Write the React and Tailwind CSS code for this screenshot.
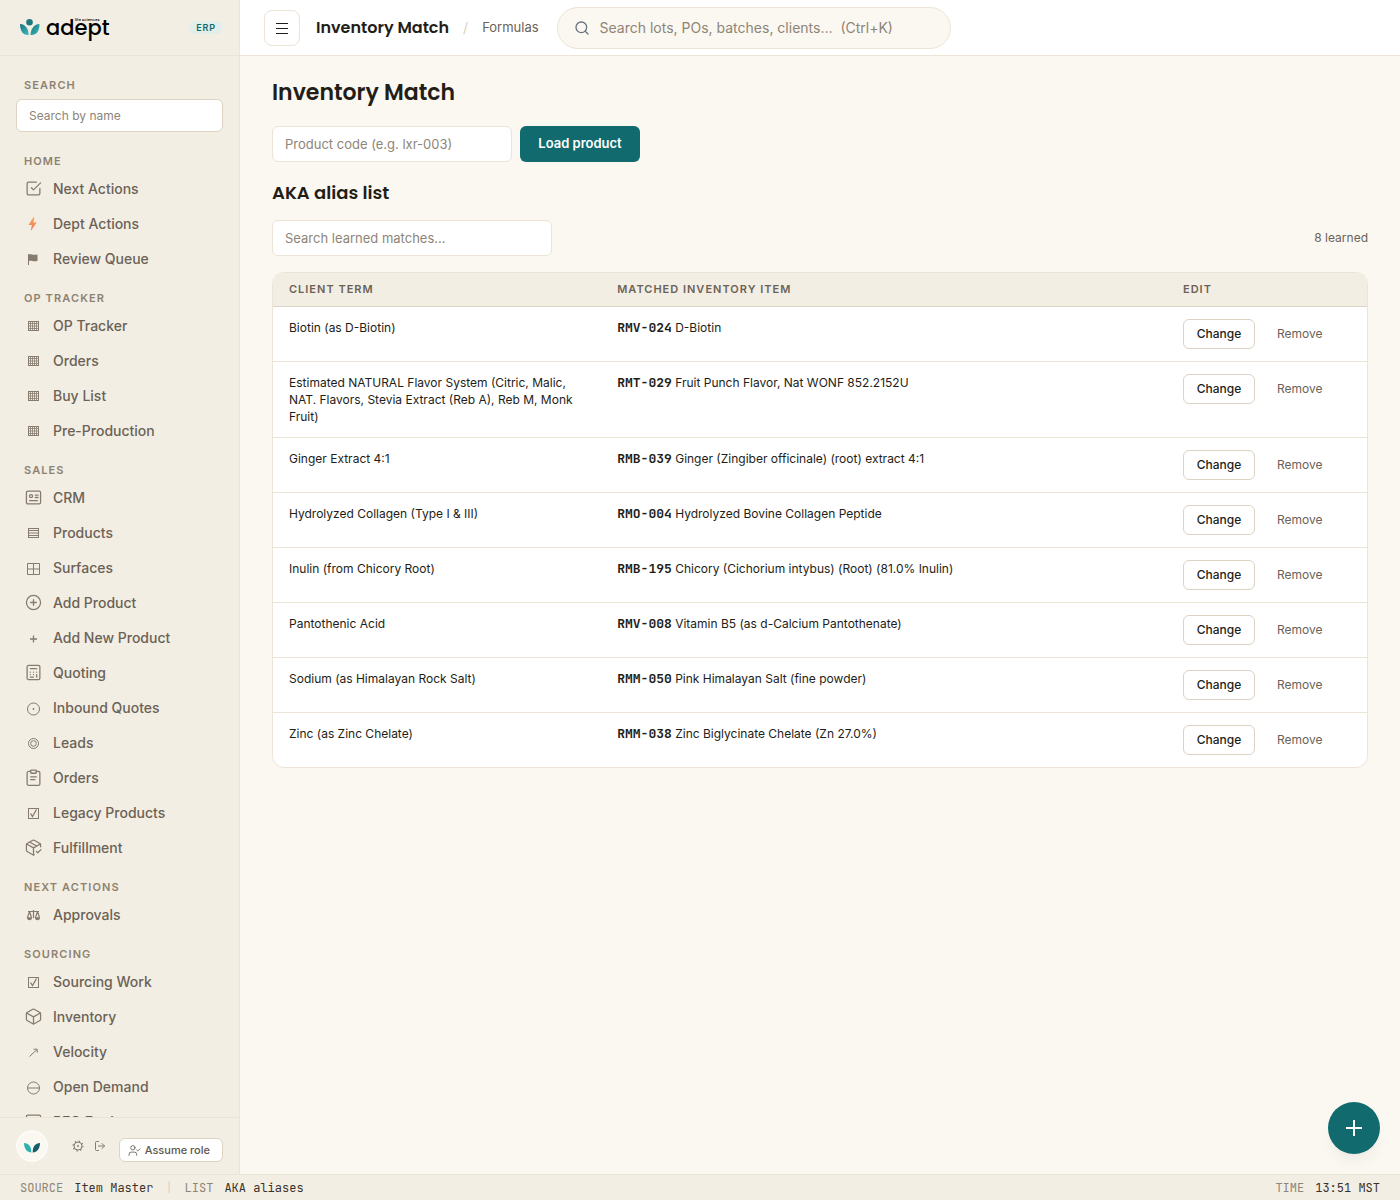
import { UserCheck, LogOut, Search } from "lucide-react";

// Larger outline icons, 24 unit grid
function Outline(props) {
  return (
    <svg width="17" height="17" viewBox="0 0 24 24" fill="none" stroke="currentColor" strokeWidth="1.8" strokeLinecap="round" strokeLinejoin="round" aria-hidden="true">
      {props.children}
    </svg>
  );
}

// Small symbol icons, one unit per pixel
function Symbol(props) {
  return (
    <svg width="18" height="18" viewBox="0 0 18 18" fill="none" stroke="currentColor" strokeWidth="1" aria-hidden="true">
      {props.children}
    </svg>
  );
}

const icons = {
  check: (
    <Outline>
      <path d="M9 11l3 3L22 4" />
      <path d="M21 12v7a2 2 0 0 1-2 2H5a2 2 0 0 1-2-2V5a2 2 0 0 1 2-2h11" />
    </Outline>
  ),
  crm: (
    <Outline>
      <rect x="2" y="3" width="20" height="18" rx="2" />
      <circle cx="8.500" cy="10" r="2.200" />
      <path d="M14.500 8.500h4M14.500 12h4M6.500 16.500h11" />
    </Outline>
  ),
  addCircle: (
    <Outline>
      <circle cx="12" cy="12" r="10" />
      <path d="M12 8v8M8 12h8" />
    </Outline>
  ),
  calc: (
    <Outline>
      <rect x="3" y="2" width="18" height="20" rx="2" />
      <path d="M7.500 6.500h9M7.500 11.500h.01M12 11.500h.01M16.500 11.500h.01M7.500 15h.01M12 15h.01M16.500 15v3.500M7.500 18.500h4.500" />
    </Outline>
  ),
  clipboard: (
    <Outline>
      <rect x="8" y="1.500" width="8" height="4.500" rx="1" />
      <path d="M16 3.500h3a2 2 0 0 1 2 2V21a2 2 0 0 1-2 2H5a2 2 0 0 1-2-2V5.500a2 2 0 0 1 2-2h3" />
      <path d="M8 11h8M8 15h6" />
    </Outline>
  ),
  boxCheck: (
    <Outline>
      <path d="M22 11V8a2 2 0 0 0-1-1.700l-8-4.500a2 2 0 0 0-2 0L3 6.300A2 2 0 0 0 2 8v8a2 2 0 0 0 1 1.700l8 4.500a2 2 0 0 0 2 0" />
      <path d="M2.300 7L12 12.500 21.700 7M12 22.500V12.500M7 4.500l9.500 5.300" />
      <path d="M16 17.500l2 2 4.500-4.500" />
    </Outline>
  ),
  box: (
    <Outline>
      <path d="M22 16V8a2 2 0 0 0-1-1.700l-8-4.500a2 2 0 0 0-2 0L3 6.300A2 2 0 0 0 2 8v8a2 2 0 0 0 1 1.700l8 4.500a2 2 0 0 0 2 0l8-4.500a2 2 0 0 0 1-1.700z" />
      <path d="M2.300 7L12 12.500 21.700 7M12 22.500V12.500" />
    </Outline>
  ),
  bolt: (
    <svg width="18" height="18" viewBox="0 0 18 18" aria-hidden="true">
      <defs>
        <linearGradient id="bolt" x1="0" y1="0" x2="0" y2="1">
          <stop offset="0" stopColor="#f9b04e" />
          <stop offset="1" stopColor="#f0706a" />
        </linearGradient>
      </defs>
      <path d="M9.500 2L4.500 10h3.300L6.700 16l6-8.500H9.500L10.300 2z" fill="url(#bolt)" />
    </svg>
  ),
  flag: (
    <Symbol>
      <path d="M4.500 4v11" />
      <path d="M5 4.500c2-.8 3 .8 8.500 0v6.500c-5 .8-6.500-.8-8.500 0z" fill="currentColor" stroke="none" />
    </Symbol>
  ),
  grid: (
    <Symbol>
      <rect x="4.500" y="4.500" width="10" height="9" />
      <path d="M6.500 4v10M8.500 4v10M10.500 4v10M12.500 4v10M4 6.500h11M4 9h11M4 11.500h11" strokeWidth="0.8" />
    </Symbol>
  ),
  rows: (
    <Symbol>
      <path d="M4.500 4v10M14.500 4v10M4 4.500h11M4 6.500h11M4 9h11M4 11.500h11M4 13.500h11" />
    </Symbol>
  ),
  window: (
    <Symbol>
      <path d="M3.500 4.500h12v11h-12zM9.500 4.500v11M3.500 10h12" />
    </Symbol>
  ),
  plus: (
    <Symbol>
      <path d="M9.500 6.500v7M6 10h7" strokeWidth="1.300" />
    </Symbol>
  ),
  dotCircle: (
    <Symbol>
      <circle cx="9.500" cy="10" r="6" />
      <circle cx="9.500" cy="10" r="0.900" fill="currentColor" stroke="none" />
    </Symbol>
  ),
  rings: (
    <Symbol>
      <circle cx="9.500" cy="9.500" r="5" />
      <circle cx="9.500" cy="9.500" r="2.800" />
    </Symbol>
  ),
  tick: (
    <Symbol>
      <rect x="4.500" y="4.500" width="10" height="10" />
      <path d="M6.500 9.500l2 3 4-7" strokeWidth="1.300" />
    </Symbol>
  ),
  scales: (
    <Symbol>
      <path d="M4 5.500h11M9.500 4v8M5.500 5.500l-2 6M5.500 5.500l2 6M13.500 5.500l-2 6M13.500 5.500l2 6" strokeWidth="1.200" />
      <path d="M2.800 11.300h5.400c0 4-5.400 4-5.400 0zM10.800 11.300h5.400c0 4-5.400 4-5.400 0z" fill="currentColor" stroke="none" />
    </Symbol>
  ),
  arrow: (
    <Symbol>
      <path d="M5.500 13.500l7.500-7M9.500 6.200h3.700v3.600" />
    </Symbol>
  ),
  minusCircle: (
    <Symbol>
      <circle cx="9.500" cy="10" r="6" />
      <path d="M3.500 10h12" />
    </Symbol>
  ),
};

const sections = [
  {
    title: "Home",
    items: [
      { name: "Next Actions", icon: "check" },
      { name: "Dept Actions", icon: "bolt" },
      { name: "Review Queue", icon: "flag" },
    ],
  },
  {
    title: "OP Tracker",
    items: [
      { name: "OP Tracker", icon: "grid" },
      { name: "Orders", icon: "grid" },
      { name: "Buy List", icon: "grid" },
      { name: "Pre-Production", icon: "grid" },
    ],
  },
  {
    title: "Sales",
    items: [
      { name: "CRM", icon: "crm" },
      { name: "Products", icon: "rows" },
      { name: "Surfaces", icon: "window" },
      { name: "Add Product", icon: "addCircle" },
      { name: "Add New Product", icon: "plus" },
      { name: "Quoting", icon: "calc" },
      { name: "Inbound Quotes", icon: "dotCircle" },
      { name: "Leads", icon: "rings" },
      { name: "Orders", icon: "clipboard" },
      { name: "Legacy Products", icon: "tick" },
      { name: "Fulfillment", icon: "boxCheck" },
    ],
  },
  {
    title: "Next Actions",
    items: [{ name: "Approvals", icon: "scales" }],
  },
  {
    title: "Sourcing",
    items: [
      { name: "Sourcing Work", icon: "tick" },
      { name: "Inventory", icon: "box" },
      { name: "Velocity", icon: "arrow" },
      { name: "Open Demand", icon: "minusCircle" },
      { name: "RFQ Engine", icon: "crm" },
    ],
  },
];

const rows = [
  { term: "Biotin (as D-Biotin)", code: "RMV-024", item: "D-Biotin" },
  { term: "Estimated NATURAL Flavor System (Citric, Malic, NAT. Flavors, Stevia Extract (Reb A), Reb M, Monk Fruit)", code: "RMT-029", item: "Fruit Punch Flavor, Nat WONF 852.2152U" },
  { term: "Ginger Extract 4:1", code: "RMB-039", item: "Ginger (Zingiber officinale) (root) extract 4:1" },
  { term: "Hydrolyzed Collagen (Type I & III)", code: "RMO-004", item: "Hydrolyzed Bovine Collagen Peptide" },
  { term: "Inulin (from Chicory Root)", code: "RMB-195", item: "Chicory (Cichorium intybus) (Root) (81.0% Inulin)" },
  { term: "Pantothenic Acid", code: "RMV-008", item: "Vitamin B5 (as d-Calcium Pantothenate)" },
  { term: "Sodium (as Himalayan Rock Salt)", code: "RMM-050", item: "Pink Himalayan Salt (fine powder)" },
  { term: "Zinc (as Zinc Chelate)", code: "RMM-038", item: "Zinc Biglycinate Chelate (Zn 27.0%)" },
];

function Logo() {
  return (
    <a href="#" aria-label="adept life sciences" className="flex items-center gap-[6px]">
      <svg width="20" height="17" viewBox="0 0 20 17" aria-hidden="true">
        <defs>
          <linearGradient id="leaf" x1="0" y1="0" x2="1" y2="1">
            <stop offset="0" stopColor="#17707a" />
            <stop offset="1" stopColor="#3cc0c0" />
          </linearGradient>
        </defs>
        <circle cx="9.500" cy="3.300" r="3.300" fill="#1d7780" />
        <path d="M0 5C5 5 8.500 9 8.700 16 3.500 16.500 0 12.500 0 5z" fill="url(#leaf)" />
        <path d="M19.500 5C14.500 5 11 9 10.500 16 16 16.500 19.500 12.500 19.500 5z" fill="url(#leaf)" />
      </svg>
      <span className="relative font-['Poppins','Inter',sans-serif] text-[21px] leading-6 font-medium text-black">
        adept
        <span className="absolute top-[2px] left-[29px] text-[4px] leading-none whitespace-nowrap">life sciences</span>
      </span>
    </a>
  );
}

function NavItem(props) {
  const item = props.item;
  return (
    <a href="#" className="flex h-[35px] items-center gap-[11px] pl-2 text-sm font-medium text-[#6b6257]">
      <span className="flex h-[18px] w-[18px] shrink-0 items-center justify-center text-[#857b6e]">{icons[item.icon]}</span>
      {item.name}
    </a>
  );
}

function Sidebar() {
  return (
    <aside className="flex w-60 shrink-0 flex-col border-r border-[#e9e4d6] bg-[#f3eee3]">
      <div className="flex h-14 shrink-0 items-center justify-between border-b border-[#e9e4d6] pr-4 pl-5">
        <Logo />
        <span className="rounded-full bg-[#e2eeea] px-[7px] text-[9px] leading-[13px] font-semibold tracking-widest text-[#116b6e]">ERP</span>
      </div>
      <nav className="min-h-0 flex-1 overflow-hidden px-4 pt-[21px]">
        <label htmlFor="nav-search" className="block pl-2 text-[11px] leading-4 font-semibold tracking-widest text-[#8d8271] uppercase">Search</label>
        <input id="nav-search" placeholder="Search by name" className="mt-[6px] mb-[7px] block h-[33px] w-full rounded-md border border-[#dcd3c2] bg-white px-3 text-xs placeholder:text-[#8d8578]" />
        {sections.map((section) => (
          <div key={section.title}>
            <h2 className="pt-[14px] pb-[2px] pl-2 text-[11px] leading-4 font-semibold tracking-widest text-[#8d8271] uppercase">{section.title}</h2>
            {section.items.map((item) => (
              <NavItem key={item.name} item={item} />
            ))}
          </div>
        ))}
      </nav>
      <div className="flex h-[57px] shrink-0 items-center border-t border-[#e9e4d6] px-4">
        <span className="flex h-8 w-8 items-center justify-center rounded-full border border-white bg-[#fbf8f1]">
          <svg width="16" height="10" viewBox="0 0 16 10" className="mt-1" aria-hidden="true">
            <path d="M0 0C4.500 0 7.500 3.500 7.300 9.500 3 9.500 0 5.500 0 0z" fill="#2fb0b0" />
            <path d="M16 0C11.500 0 8.500 3.500 8.700 9.500 13 9.500 16 5.500 16 0z" fill="#155e69" />
          </svg>
        </span>
        <button aria-label="Settings" className="ml-6 text-[#857b6e]">
          <svg width="12" height="12" viewBox="0 0 12 12" fill="none" stroke="currentColor" aria-hidden="true">
            <circle cx="6" cy="6" r="4" />
            <circle cx="6" cy="6" r="4.900" strokeWidth="1.200" strokeDasharray="1.400 2.448" />
            <circle cx="6" cy="6" r="0.900" fill="currentColor" stroke="none" />
          </svg>
        </button>
        <button aria-label="Log out" className="ml-[10px] text-[#857b6e]"><LogOut size={12} strokeWidth={2} /></button>
        <button className="mt-2 ml-auto flex h-6 items-center gap-1 rounded-md border border-[#dcd3c2] bg-white pr-3 pl-2 text-[11px] font-medium text-[#5e564c]">
          <UserCheck size={13} strokeWidth={1.5} />
          Assume role
        </button>
      </div>
    </aside>
  );
}

function Header() {
  return (
    <header className="flex h-14 shrink-0 items-center border-b border-[#ece5d6] bg-white px-6">
      <button aria-label="Menu" className="flex h-9 w-9 items-center justify-center rounded-lg border border-[#ece5d6]">
        <svg width="12" height="12" viewBox="0 0 12 12" stroke="currentColor" strokeWidth="1" aria-hidden="true">
          <path d="M0 1.500h12M0 6.500h12M0 11.500h12" />
        </svg>
      </button>
      <span className="ml-4 font-['Poppins','Inter',sans-serif] text-base font-semibold">Inventory Match</span>
      <span className="mx-[14px] text-sm text-[#d8cfbf]">/</span>
      <a href="#" className="text-[13px] text-[#6b6257]">Formulas</a>
      <label className="ml-[18px] flex h-[42px] w-[394px] items-center gap-[10px] rounded-full border border-[#ece5d6] bg-[#fbf8f1] px-4">
        <Search size={16} strokeWidth={2} className="text-[#6b7280]" />
        <input aria-label="Search everything" placeholder="Search lots, POs, batches, clients…  (Ctrl+K)" className="min-w-0 flex-1 text-sm placeholder:text-[#8d8578]" />
      </label>
    </header>
  );
}

function AliasTable() {
  return (
    <div className="mt-4 overflow-hidden rounded-xl border border-[#ece5d6] bg-white">
      <table className="w-full table-fixed text-left">
        <thead className="bg-[#f3eee3] text-[11px] leading-4 tracking-[1px] text-[#6b6257] uppercase">
          <tr className="h-[33px] border-b border-[#dbd5c5]">
            <th className="w-[30%] px-4 font-semibold">Client term</th>
            <th className="px-4 font-semibold">Matched inventory item</th>
            <th className="w-[200px] px-4 font-semibold">Edit</th>
          </tr>
        </thead>
        <tbody className="text-xs leading-[17px]">
          {rows.map((row) => (
            <tr key={row.code} className="border-b border-[#ece5d6] align-top last:border-b-0">
              <td className="px-4 py-3">{row.term}</td>
              <td className="px-4 py-3">
                <span className="font-['JetBrains_Mono','DejaVu_Sans_Mono',monospace] text-[13px] leading-none font-semibold">{row.code}</span> {row.item}
              </td>
              <td className="px-4 py-3">
                <div className="flex gap-2">
                  <button className="h-[30px] w-[72px] rounded-md border border-[#dcd3c2] bg-white font-medium">Change</button>
                  <button className="h-[30px] px-[14px] text-[#6b6257]">Remove</button>
                </div>
              </td>
            </tr>
          ))}
        </tbody>
      </table>
    </div>
  );
}

function StatusBar() {
  return (
    <footer className="flex h-[26px] shrink-0 items-center border-t border-[#e9e4d6] bg-[#f3eee3] px-5 font-['JetBrains_Mono','DejaVu_Sans_Mono',monospace] text-xs text-[#8d8578]">
      <span>SOURCE</span>
      <span className="ml-[11px] text-[#3a332b]">Item Master</span>
      <span className="mx-3 text-[#e0d3c2]">|</span>
      <span>LIST</span>
      <span className="ml-[11px] text-[#3a332b]">AKA aliases</span>
      <span className="ml-auto">TIME</span>
      <span className="ml-[11px] text-[#3a332b]">13:51 MST</span>
    </footer>
  );
}

export default function App() {
  return (
    <div className="flex h-screen flex-col bg-[#fbf8f1] font-['Inter',sans-serif] text-[#231d17]">
      <div className="flex min-h-0 flex-1">
        <Sidebar />
        <div className="flex min-w-0 flex-1 flex-col">
          <Header />
          <main className="min-h-0 flex-1 px-8 pt-[21px]">
            <h1 className="font-['Poppins','Inter',sans-serif] text-[22px] leading-8 font-semibold">Inventory Match</h1>
            <form className="mt-[17px] flex gap-2">
              <input aria-label="Product code" placeholder="Product code (e.g. lxr-003)" className="h-9 w-60 rounded-md border border-[#ece5d6] bg-white px-3 text-[13px] placeholder:text-[#8d8578]" />
              <button type="button" className="h-9 w-[120px] rounded-md bg-[#116b6e] text-[13px] font-semibold text-white">Load product</button>
            </form>
            <h2 className="mt-[18px] font-['Poppins','Inter',sans-serif] text-lg leading-[26px] font-semibold">AKA alias list</h2>
            <div className="mt-[14px] flex items-center justify-between">
              <input aria-label="Search learned matches" placeholder="Search learned matches…" className="h-9 w-[280px] rounded-md border border-[#ece5d6] bg-white px-3 text-[13px] placeholder:text-[#8d8578]" />
              <span className="text-xs text-[#6b6257]">8 learned</span>
            </div>
            <AliasTable />
          </main>
        </div>
      </div>
      <StatusBar />
      <button aria-label="Add" className="fixed right-5 bottom-[46px] flex h-13 w-13 items-center justify-center rounded-full bg-[#116b6e] text-white shadow-lg shadow-black/5">
        <svg width="16" height="16" viewBox="0 0 16 16" stroke="currentColor" strokeWidth="2" aria-hidden="true">
          <path d="M8 0v16M0 8h16" />
        </svg>
      </button>
    </div>
  );
}
